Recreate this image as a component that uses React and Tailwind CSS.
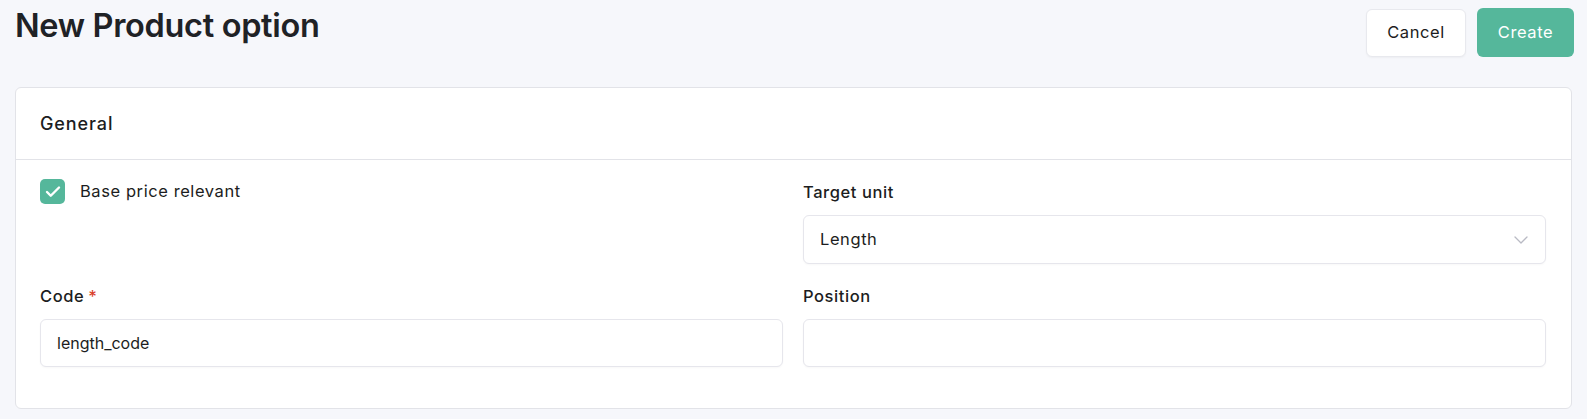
import React from "react";
import { ChevronDown, Check } from "lucide-react";

const font = { fontFamily: "Inter, 'Noto Sans', sans-serif" };

const Label = ({ children, required }) => (
  <label className="block text-[16.5px] font-medium leading-6 tracking-[0.035em] text-[#1c1d21]">
    {children}
    {required && <span className="ml-1 text-[#d9412b]">*</span>}
  </label>
);

const App = () => {
  return (
    <div
      className="min-h-[419px] w-full bg-[#f6f7fb] px-[15px] pt-[7px] text-[#1c1d21]"
      style={font}
    >
      <div className="flex items-start justify-between">
        <h1 className="mt-[1px] text-[32.5px] font-semibold leading-[36px] tracking-[-0.01em] text-[#1f2226]">
          New Product option
        </h1>
        <div className="mr-[-2px] flex items-center gap-[11px] pt-[1px]">
          <button className="h-[48px] w-[100px] rounded-md border border-[#e8e9ee] bg-white text-[16.5px] tracking-[0.035em] text-[#1c1d21] shadow-[0_1px_2px_rgba(0,0,0,0.04)]">
            Cancel
          </button>
          <button className="h-[49px] w-[97px] rounded-md bg-[#55b79b] text-[16.5px] tracking-[0.035em] text-white">
            Create
          </button>
        </div>
      </div>

      <div className="mt-[30px] rounded-md border border-[#e2e3e8] bg-white">
        <div className="flex h-[72px] items-center border-b border-[#e2e3e8] px-[24px]">
          <h2 className="text-[18px] font-medium tracking-[0.05em] text-[#1c1d21]">General</h2>
        </div>

        <div className="grid grid-cols-2 gap-x-[20px] gap-y-[20px] pl-[24px] pr-[25px] pb-[41px] pt-[19px]">
          <div className="flex items-start gap-[15px]">
            <span className="flex h-[25px] w-[25px] items-center justify-center rounded-[5px] bg-[#55b79b]">
              <Check size={18} strokeWidth={3.2} className="text-white" />
            </span>
            <span className="text-[16.5px] leading-[25px] tracking-[0.035em] text-[#1c1d21]">
              Base price relevant
            </span>
          </div>

          <div className="pt-[1px]">
            <Label>Target unit</Label>
            <div className="mt-[11px] flex h-[49px] items-center justify-between rounded-md border border-[#e6e6ec] bg-white pl-[16px] pr-[12px] shadow-[0_1px_2px_rgba(0,0,0,0.03)]">
              <span className="text-[16.5px] tracking-[0.035em] text-[#1c1d21]">Length</span>
              <ChevronDown size={24} strokeWidth={1.3} className="text-[#b9bac4]" />
            </div>
          </div>

          <div>
            <Label required>Code</Label>
            <div className="mt-[11px] flex h-[48px] items-center rounded-md border border-[#e6e6ec] bg-white px-[16px] shadow-[0_1px_2px_rgba(0,0,0,0.03)]">
              <span className="text-[16px] text-[#1c1d21]">length_code</span>
            </div>
          </div>

          <div>
            <Label>Position</Label>
            <div className="mt-[11px] h-[48px] rounded-md border border-[#e6e6ec] bg-white shadow-[0_1px_2px_rgba(0,0,0,0.03)]" />
          </div>
        </div>
      </div>
    </div>
  );
};

export default App;
